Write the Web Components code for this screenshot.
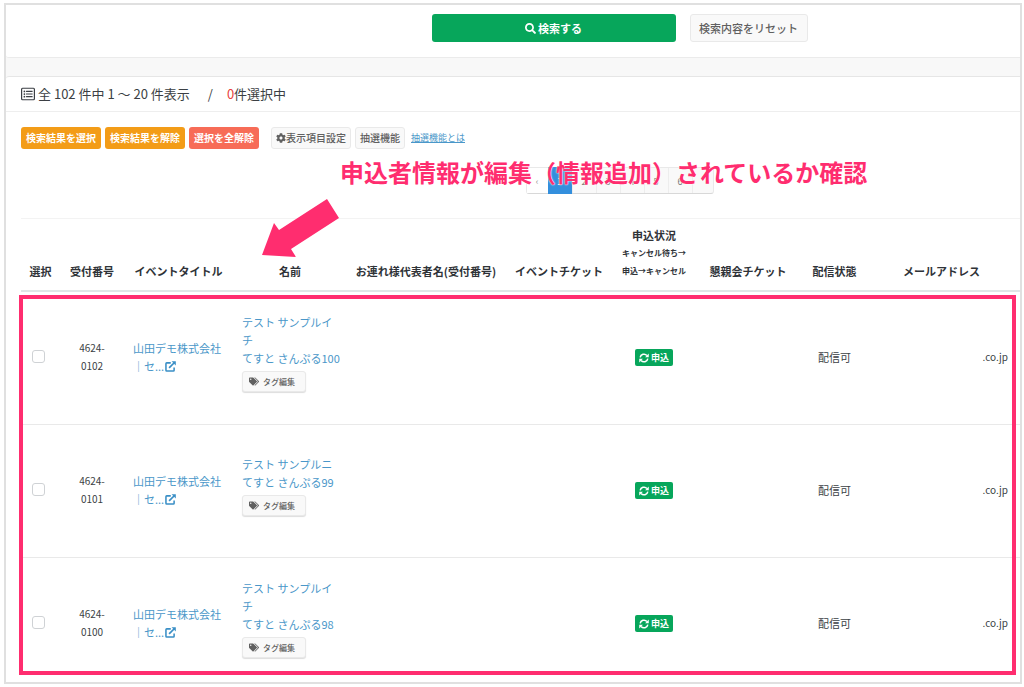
<!DOCTYPE html>
<html lang="ja">
<head>
<meta charset="utf-8">
<meta name="viewport" content="width=device-width, initial-scale=1">
<title>申込者一覧</title>
<style>
  html, body { margin: 0; height: 100%; background: #fff; }
  body {
    box-sizing: border-box;
    padding: 3px 2px 3px 4px;
    overflow: hidden;
    font-family: "Noto Sans CJK JP", sans-serif;
    font-size: 11px;
    line-height: 18px;
    color: #3b3f44;
    --link: #4a97c9;
    --green: #07a65b;
    --pink: #ff2d6f;
    --shift: 213px;
  }
</style>
</head>
<body>
<admin-frame>
  <search-actions></search-actions>
  <result-panel>
    <result-heading slot="heading" total="102" from="1" to="20" selected="0"></result-heading>
    <result-toolbar></result-toolbar>
    <page-nav></page-nav>
    <applicant-table></applicant-table>
  </result-panel>
  <note-overlay slot="note">申込者情報が編集（情報追加）されているか確認</note-overlay>
</admin-frame>

<script>
const define = (name, html, setup) => {
  const template = document.createElement('template');
  template.innerHTML = html;
  customElements.define(name, class extends HTMLElement {
    connectedCallback() {
      if (this.shadowRoot) return;
      const root = this.attachShadow({ mode: 'open' });
      root.append(template.content.cloneNode(true));
      if (setup) setup(this, root);
    }
  });
};

const ICONS = {
  search: ['0 0 512 512', '<path d="M505 442.7L405.3 343c-4.5-4.5-10.6-7-17-7H372c27.6-35.3 44-79.7 44-128C416 93.1 322.9 0 208 0S0 93.1 0 208s93.1 208 208 208c48.3 0 92.7-16.4 128-44v16.3c0 6.4 2.5 12.5 7 17l99.7 99.7c9.4 9.4 24.6 9.4 33.9 0l28.3-28.3c9.4-9.4 9.4-24.6.1-34zM208 336c-70.7 0-128-57.2-128-128 0-70.7 57.2-128 128-128 70.7 0 128 57.2 128 128 0 70.7-57.2 128-128 128z"/>'],
  list: ['0 0 512 512', '<rect x="22" y="46" width="468" height="420" rx="34" fill="none" stroke="currentColor" stroke-width="44"/><g><circle cx="124" cy="160" r="32"/><circle cx="124" cy="256" r="32"/><circle cx="124" cy="352" r="32"/><rect x="184" y="138" width="240" height="44" rx="8"/><rect x="184" y="234" width="240" height="44" rx="8"/><rect x="184" y="330" width="240" height="44" rx="8"/></g>'],
  cog: ['0 0 512 512', '<path d="M487.4 315.7l-42.6-24.6c4.3-23.2 4.3-47 0-70.2l42.6-24.6c4.9-2.8 7.1-8.6 5.5-14-11.1-35.6-30-67.8-54.7-94.6-3.8-4.1-10-5.1-14.8-2.3L380.8 110c-17.9-15.4-38.5-27.3-60.8-35.1V25.8c0-5.6-3.9-10.5-9.4-11.7-36.7-8.2-74.3-7.8-109.2 0-5.5 1.2-9.4 6.1-9.4 11.7V75c-22.2 7.9-42.8 19.8-60.8 35.1L88.7 85.5c-4.9-2.8-11-1.9-14.8 2.3-24.7 26.7-43.6 58.9-54.7 94.6-1.7 5.4.6 11.2 5.5 14L67.3 221c-4.3 23.2-4.3 47 0 70.2l-42.6 24.6c-4.9 2.8-7.1 8.6-5.5 14 11.1 35.6 30 67.8 54.7 94.6 3.8 4.1 10 5.1 14.8 2.3l42.6-24.6c17.9 15.4 38.5 27.3 60.8 35.1v49.2c0 5.6 3.9 10.5 9.4 11.7 36.7 8.2 74.3 7.8 109.2 0 5.5-1.2 9.4-6.1 9.4-11.7v-49.2c22.2-7.9 42.8-19.8 60.8-35.1l42.6 24.6c4.9 2.8 11 1.9 14.8-2.3 24.7-26.7 43.6-58.9 54.7-94.6 1.5-5.5-.7-11.3-5.6-14.1zM256 336c-44.1 0-80-35.9-80-80s35.9-80 80-80 80 35.9 80 80-35.9 80-80 80z"/>'],
  tags: ['0 0 640 512', '<path d="M497.941 225.941L286.059 14.059A48 48 0 0 0 252.118 0H48C21.49 0 0 21.49 0 48v204.118a48 48 0 0 0 14.059 33.941l211.882 211.882c18.744 18.745 49.136 18.746 67.882 0l204.118-204.118c18.745-18.745 18.745-49.137 0-67.882zM112 160c-26.51 0-48-21.49-48-48s21.49-48 48-48 48 21.49 48 48-21.49 48-48 48zm513.941 133.823L421.823 497.941c-18.745 18.745-49.137 18.745-67.882 0l-.36-.36L527.64 323.522c16.999-16.999 26.36-39.6 26.36-63.64s-9.362-46.641-26.36-63.64L331.397 0h48.721a48 48 0 0 1 33.941 14.059l211.882 211.882c18.745 18.745 18.745 49.137 0 67.882z"/>'],
  sync: ['0 0 512 512', '<g fill="none" stroke="currentColor" stroke-width="76"><path d="M60 226A200 200 0 0 1 406 126"/><path d="M452 286A200 200 0 0 1 106 386"/></g><path d="M500 30V218H312ZM12 482V294H200Z"/>'],
  external: ['0 0 512 512', '<path d="M268 88H80Q44 88 44 124V432Q44 468 80 468H388Q424 468 424 432V300" fill="none" stroke="currentColor" stroke-width="72"/><path d="M190 322L430 82" fill="none" stroke="currentColor" stroke-width="80"/><path d="M306 8H504V206Z"/>']
};

define('fa-icon', `
  <style>
    :host { display: inline-block; flex: none; width: 11px; height: 11px; white-space: normal; }
    svg { display: block; width: 100%; height: 100%; fill: currentColor; }
  </style>
  <svg aria-hidden="true"></svg>`,
  (el, root) => {
    const [box, body] = ICONS[el.getAttribute('name')];
    const svg = root.querySelector('svg');
    svg.setAttribute('viewBox', box);
    svg.innerHTML = body;
  });

define('action-button', `
  <style>
    :host { display: block; }
    button {
      box-sizing: border-box; width: 100%; height: 22px; margin: 0; padding: 0 4px;
      display: flex; align-items: center; justify-content: center;
      border: 1px solid #e9e9e9; border-radius: 3px; background: #f9f9f9; color: #606060;
      font: 500 10px/16px "Noto Sans CJK JP", sans-serif; white-space: nowrap; cursor: pointer;
    }
    :host([tone="orange"]) button { padding: 0 5px; border: 0; background: #f39c17; color: #fff; font-weight: 700; }
    :host([tone="red"]) button { padding: 0 5px; border: 0; background: #f76c57; color: #fff; font-weight: 700; }
    :host([tone="green"]) button { border: 0; background: var(--green); color: #fff; font-weight: 700; }
    :host([size="large"]) button { height: 28px; font-size: 11px; gap: 2px; padding: 0 8px; }
    :host([size="small"]) button { height: 21px; font-size: 8px; gap: 4px; padding: 0 6px; justify-content: flex-start; box-shadow: 0 1px 1px #ddd; }
  </style>
  <button type="button"><slot></slot></button>`);

define('admin-frame', `
  <style>
    :host {
      display: block; position: relative; box-sizing: border-box; height: 100%;
      border: 2px solid #e0e0e0; background: #f8f8f8; overflow: hidden;
    }
  </style>
  <slot></slot><slot name="note"></slot>`);

define('search-actions', `
  <style>
    :host {
      display: flex; justify-content: center; gap: 14px; padding: 9px 0 15px var(--shift);
      background: #fff; border-bottom: 1px solid #ebebeb; border-radius: 0 0 0 3px;
    }
    .submit { width: 244px; }
    .reset { width: 118px; }
    fa-icon { width: 11px; height: 11px; }
  </style>
  <action-button class="submit" tone="green" size="large"><fa-icon name="search"></fa-icon>検索する</action-button>
  <action-button class="reset" size="large">検索内容をリセット</action-button>`);

define('result-panel', `
  <style>
    :host { display: block; margin-top: 18px; background: #fff; border-top: 1px solid #e6e6e6; border-radius: 3px 0 0 0; }
    header { padding: 8px 15px; border-bottom: 1px solid #eee; }
    .body { padding: 15px 0 0 15px; }
  </style>
  <header><slot name="heading"></slot></header>
  <div class="body"><slot></slot></div>`);

define('result-heading', `
  <style>
    :host { display: block; }
    h2 { display: flex; align-items: center; margin: 0; font-size: 13px; line-height: 18px; font-weight: 400; white-space: pre; }
    fa-icon { width: 14px; height: 14px; margin-right: 3px; }
    .slash { margin: 0 14px 0 18px; }
    b { font-weight: 400; color: #e8413c; }
  </style>
  <h2><fa-icon name="list"></fa-icon><span class="range"></span><span class="slash">/</span><b></b>件選択中</h2>`,
  (el, root) => {
    const a = n => el.getAttribute(n);
    root.querySelector('.range').textContent = `全 ${a('total')} 件中 ${a('from')} ～ ${a('to')} 件表示`;
    root.querySelector('b').textContent = a('selected');
  });

define('result-toolbar', `
  <style>
    :host { display: flex; align-items: center; gap: 4px; }
    .group { display: flex; align-items: center; gap: 4px; margin-left: 8px; }
    a { margin-left: 2px; font-size: 9px; color: var(--link); text-decoration: underline; }
    fa-icon { width: 10px; height: 10px; }
  </style>
  <action-button tone="orange">検索結果を選択</action-button>
  <action-button tone="orange">検索結果を解除</action-button>
  <action-button tone="red">選択を全解除</action-button>
  <div class="group">
    <action-button><fa-icon name="cog"></fa-icon>表示項目設定</action-button>
    <action-button>抽選機能</action-button>
    <a href="#about">抽選機能とは</a>
  </div>`);

define('page-nav', `
  <style>
    :host { display: flex; justify-content: center; padding: 18px 0 24px calc(var(--shift) - 15px); }
    nav { display: flex; border: 1px solid #e9e9e9; border-bottom-color: #d8d8d8; border-radius: 3px; background: #f9f9f9; }
    a { box-sizing: border-box; width: 24px; height: 25px; line-height: 27px; text-align: center; font-size: 9px; color: #777; text-decoration: none; border-left: 1px solid #ededed; }
    a:first-child { width: 21px; background: #fff; color: #999; border: 0; }
    a:last-child { width: 21px; }
    a[aria-current] { height: 27px; margin: -1px 0; line-height: 29px; background: #338fdd; border: 0; color: #fff; }
  </style>
  <nav aria-label="ページ"><a href="#prev">‹</a><a href="#1" aria-current="page">1</a><a href="#2">2</a><a href="#3">3</a><a href="#4">4</a><a href="#5">5</a><a href="#6">6</a><a href="#next" aria-label="次へ"></a></nav>`);

define('status-badge', `
  <style>
    :host {
      display: inline-flex; align-items: center; gap: 2px; height: 17px; padding: 0 4px; vertical-align: middle;
      border-radius: 2px; background: var(--green); color: #fff; font-size: 9px; line-height: 17px; font-weight: 700;
    }
    fa-icon { width: 10px; height: 10px; }
  </style>
  <fa-icon name="sync"></fa-icon><slot></slot>`);

const ROWS = [
  { no: '0102', name: ['テスト サンプルイ', 'チ'], kana: 'てすと さんぷる100' },
  { no: '0101', name: ['テスト サンプルニ'], kana: 'てすと さんぷる99' },
  { no: '0100', name: ['テスト サンプルイ', 'チ'], kana: 'てすと さんぷる98' }
];

define('applicant-table', `
  <style>
    :host { display: block; }
    table { width: 100%; table-layout: fixed; border-collapse: separate; border-spacing: 0; border-top: 1px solid #f3f3f3; }
    th, td { padding: 7px 9px 10px; text-align: center; }
    th { padding-inline: 0; vertical-align: bottom; font-weight: 700; color: #2f3338; border-bottom: 2px solid #e0e6e6; white-space: nowrap; }
    th small { display: block; font-size: 8px; }
    td { box-sizing: border-box; height: 133px; vertical-align: middle; border-bottom: 1px solid #e9e9e9; }
    th:last-child { padding-right: 5px; }
    td:last-child { padding-right: 12px; text-align: right; }
    .title, .name { text-align: left; white-space: nowrap; }
    .name { padding-bottom: 18px; }
    a { color: var(--link); text-decoration: none; }
    a fa-icon { width: 11px; height: 11px; margin-left: 1px; vertical-align: -1px; color: #3a8fc6; }
    .name action-button { width: 64px; margin-top: 4px; }
    .name fa-icon { width: 10px; height: 9px; }
    td:first-child { padding-inline: 0 5px; }
    input {
      appearance: none; display: block; box-sizing: border-box; width: 13px; height: 13px; margin: 0 auto;
      border: 1px solid #cfd2d5; border-radius: 3px; background: #fff;
    }
    .no { padding-inline: 18px; }
    .no, .mail { font-size: 10px; }
  </style>
  <table>
    <colgroup>
      <col style="width:39px"><col style="width:64px"><col style="width:109px"><col style="width:114px"><col style="width:158px">
      <col style="width:108px"><col style="width:82px"><col style="width:106px"><col style="width:67px"><col style="width:152px">
    </colgroup>
    <thead><tr>
      <th>選択</th><th>受付番号</th><th>イベントタイトル</th><th>名前</th><th>お連れ様代表者名(受付番号)</th>
      <th>イベントチケット</th><th>申込状況<small>キャンセル待ち→</small><small>申込→キャンセル</small></th>
      <th>懇親会チケット</th><th>配信状態</th><th>メールアドレス</th>
    </tr></thead>
    <tbody></tbody>
  </table>`,
  (el, root) => {
    root.querySelector('tbody').innerHTML = ROWS.map(r => `
      <tr>
        <td><input type="checkbox" aria-label="4624-${r.no} を選択"></td>
        <td class="no">4624-<br>${r.no}</td>
        <td class="title"><a href="#event">山田デモ株式会社<br>｜セ...<fa-icon name="external"></fa-icon></a></td>
        <td class="name"><a href="#${r.no}">${r.name.join('<br>')}<br>${r.kana}</a>
          <action-button size="small"><fa-icon name="tags"></fa-icon>タグ編集</action-button></td>
        <td></td><td></td>
        <td><status-badge>申込</status-badge></td>
        <td></td><td>配信可</td><td class="mail">.co.jp</td>
      </tr>`).join('');
  });

define('note-overlay', `
  <style>
    :host { position: absolute; inset: 0; pointer-events: none; color: var(--pink); }
    .area { position: absolute; inset: 290px 4px 7px 13px; border: 4px solid var(--pink); }
    p {
      position: absolute; left: 334px; top: 149px; margin: 0; font-size: 24px; line-height: 36px; font-weight: 700;
      white-space: nowrap; text-shadow: 0 0 1px #fff, 0 0 2px #fff;
    }
    svg { position: absolute; left: 256px; top: 194px; width: 78px; height: 58px; fill: currentColor; }
  </style>
  <div class="area"></div>
  <p><slot></slot></p>
  <svg viewBox="0 0 78 58" aria-hidden="true"><path d="M0 56L12 24L17 31L65 0L77 19L29 50L34 58Z"/></svg>`);
</script>
</body>
</html>
